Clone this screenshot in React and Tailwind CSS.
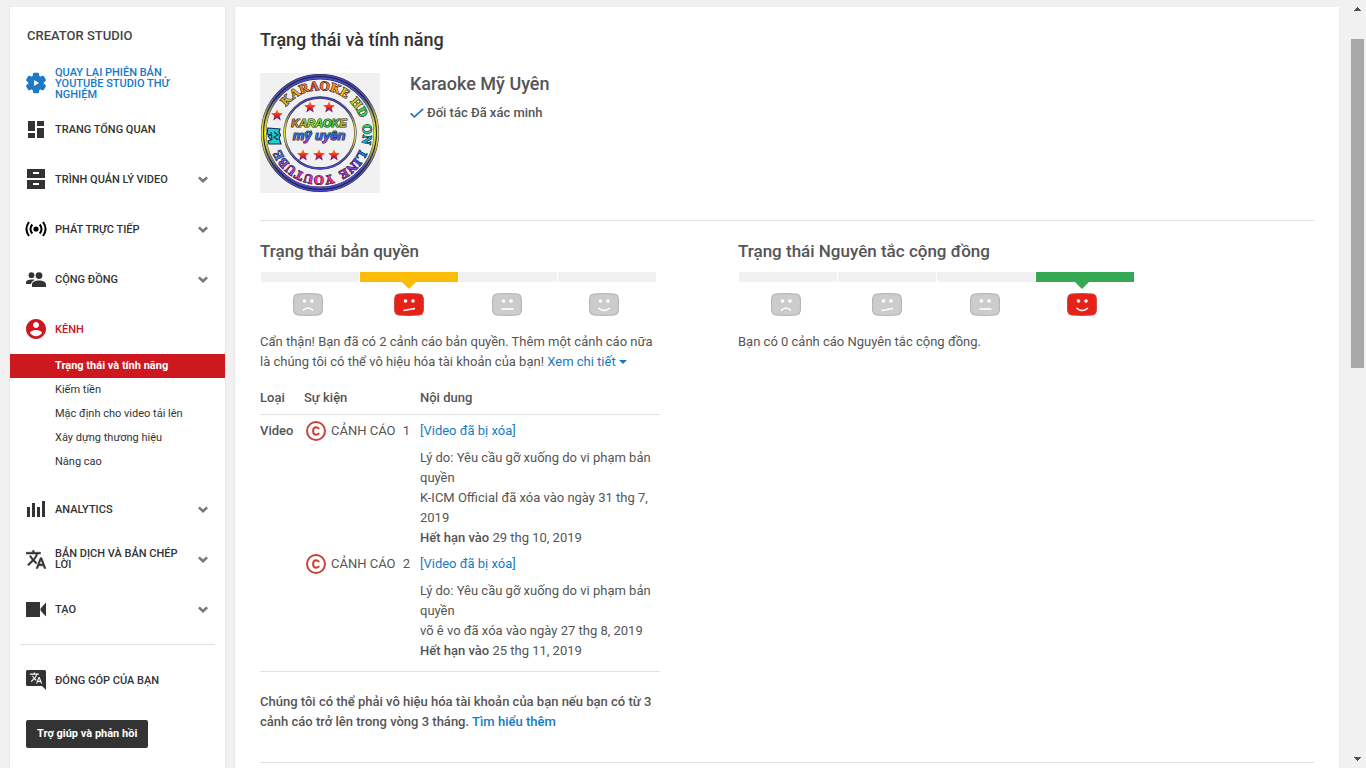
import React from 'react';

const GearPlayIcon = () => (
  <svg width="24" height="24" viewBox="0 0 24 24" className="-mx-px shrink-0">
    <path fill="#1d79c9" stroke="#1d79c9" strokeWidth="1.200" strokeLinejoin="round" d="M19.14,12.94c0.04-0.3,0.06-0.61,0.06-0.94c0-0.32-0.02-0.64-0.07-0.94l2.03-1.58c0.18-0.14,0.23-0.41,0.12-0.61l-1.92-3.32c-0.12-0.22-0.37-0.29-0.59-0.22l-2.39,0.96c-0.5-0.38-1.03-0.7-1.62-0.94L14.4,2.81c-0.04-0.24-0.24-0.41-0.48-0.41h-3.84c-0.24,0-0.43,0.17-0.47,0.41L9.25,5.35C8.66,5.59,8.12,5.92,7.63,6.29L5.24,5.33c-0.22-0.08-0.47,0-0.59,0.22L2.74,8.87C2.62,9.08,2.66,9.34,2.86,9.48l2.03,1.58C4.84,11.36,4.8,11.69,4.8,12s0.02,0.64,0.07,0.94l-2.03,1.58c-0.18,0.14-0.23,0.41-0.12,0.61l1.92,3.32c0.12,0.22,0.37,0.29,0.59,0.22l2.39-0.96c0.5,0.38,1.03,0.7,1.62,0.94l0.36,2.54c0.05,0.24,0.24,0.41,0.48,0.41h3.84c0.24,0,0.44-0.17,0.47-0.41l0.36-2.54c0.59-0.24,1.13-0.56,1.62-0.94l2.39,0.96c0.22,0.08,0.47,0,0.59-0.22l1.92-3.32c0.12-0.22,0.07-0.47-0.12-0.61L19.14,12.94z" />
    <path fill="#fff" d="M10 9v6l5-3z" />
  </svg>
);

const DashboardIcon = () => (
  <svg width="16" height="17" viewBox="0 0 16 17" fill="#333">
    <path d="M0 0h7v10H0zM9 0h7v5H9zM9 7h7v10H9zM0 12h7v5H0z" />
  </svg>
);

const DrawerIcon = () => (
  <svg width="18" height="20" viewBox="0 0 18 20">
    <path fill="#333" d="M0 0h18v9H0zM0 11h18v9H0z" />
    <path fill="#fff" d="M6 3h6v2H6zM6 14h6v2H6z" />
  </svg>
);

const LiveIcon = () => (
  <svg width="22" height="16" viewBox="0 0 22 16" fill="none" stroke="#000" strokeWidth="2">
    <circle cx="11" cy="8" r="2.6" fill="#000" stroke="none" />
    <path d="M4 1Q-1.200 8 4 15M18 1Q23.200 8 18 15M7.300 3.500Q3.600 8 7.300 12.500M14.700 3.500Q18.400 8 14.700 12.500" />
  </svg>
);

const PeopleIcon = () => (
  <svg width="20" height="15" viewBox="0 0 20 15" fill="#333">
    <circle cx="5.500" cy="3.200" r="2.900" />
    <circle cx="13" cy="3.600" r="3.400" />
    <path d="M0 12V10.500C0 8.500 3 7.600 6 7.600c1 0 2 .1 2.800.3C6.500 9 5.200 10.200 5 12zM6 15v-2.500C6 10 9.500 8.600 13 8.600s7 1.400 7 3.900V15z" />
  </svg>
);

const ChannelIcon = () => (
  <svg width="20" height="20" viewBox="2 2 20 20" fill="#cc181e">
    <path d="M12 2C6.480 2 2 6.480 2 12s4.480 10 10 10 10-4.480 10-10S17.520 2 12 2zm0 3c1.660 0 3 1.340 3 3s-1.340 3-3 3-3-1.340-3-3 1.340-3 3-3zm0 14.200c-2.500 0-4.710-1.280-6-3.220.030-1.990 4-3.080 6-3.080 1.990 0 5.970 1.090 6 3.080-1.290 1.940-3.500 3.220-6 3.220z" />
  </svg>
);

const AnalyticsIcon = () => (
  <svg width="18" height="16" viewBox="0 0 18 16" fill="#333">
    <path d="M0 6h3v10H0zM5 2h3v14H5zM10 6h3v10h-3zM15 0h3v16h-3z" />
  </svg>
);

const translatePath =
  'M12.870 15.070l-2.540-2.510.030-.030c1.740-1.940 2.980-4.170 3.710-6.530H17V4h-7V2H8v2H1v1.990h11.170C11.500 7.920 10.440 9.750 9 11.350 8.070 10.320 7.300 9.190 6.690 8h-2c.730 1.630 1.730 3.170 2.980 4.560l-5.090 5.020L4 19l5-5 3.110 3.110.760-2.040zM18.500 10h-2L12 22h2l1.120-3h4.750L21 22h2l-4.500-12zm-2.620 7l1.620-4.330L19.120 17h-3.240z';

const TranslateIcon = () => (
  <svg width="20" height="19" viewBox="1 2 22 20" fill="#333" stroke="#333" strokeWidth=".5">
    <path d={translatePath} />
  </svg>
);

const CameraIcon = () => (
  <svg width="20" height="15" viewBox="0 0 20 15" fill="#333">
    <path d="M0 0h14v15H0zM20 .5v14L14.500 8.500v-2z" />
  </svg>
);

const ContributeIcon = () => (
  <svg width="20" height="20" viewBox="0 0 20 20">
    <path fill="#333" d="M1.500 0h17A1.500 1.500 0 0 1 20 1.500V20l-4-4H1.500A1.500 1.500 0 0 1 0 14.500v-13A1.500 1.500 0 0 1 1.500 0z" />
    <path fill="#fff" transform="translate(3.300 1.300) scale(.56)" d={translatePath} />
  </svg>
);

const Chevron = () => (
  <svg width="10" height="8" viewBox="0 0 10 8" fill="none" stroke="#777" strokeWidth="2.600" className="ml-auto mt-px shrink-0">
    <path d="M.9 1.400L5 5.300l4.100-3.900" />
  </svg>
);

const CopyrightIcon = () => (
  <svg width="22" height="22" viewBox="0 0 22 22" fill="none" stroke="#c6433a" className="shrink-0">
    <circle cx="11" cy="11" r="9" strokeWidth="2" />
    <path d="M14 12.800q-.7 2-2.900 2-3-.1-3-3.800t3-3.800q2.200 0 2.900 2" strokeWidth="2" />
  </svg>
);

const mouths = {
  sad: 'M10 17.500Q15 12.500 20 17.500',
  unsure: 'M9.500 17.500L21 15.500',
  neutral: 'M9.500 16h12',
  happy: 'M9.500 15Q15 20 21 15',
};

const Face = ({ mood, active }) => (
  <svg width="30" height="23" viewBox="0 0 30 23">
    <path
      d="M4.500 1Q15 .1 25.500 1 29 1.300 29.300 5q.4 6.500 0 13-.3 3.700-3.800 4-10.500.9-21 0Q1 21.700.7 18q-.4-6.500 0-13Q1 1.300 4.500 1z"
      fill={active ? '#e62117' : '#ccc'}
      stroke={active ? '#d0443c' : '#b0b0b0'}
    />
    <circle cx="11.500" cy="8" r="1.800" fill="#fff" />
    <circle cx="19" cy="8" r="1.800" fill="#fff" />
    <path d={mouths[mood]} fill="none" stroke="#fff" strokeWidth="1.600" />
  </svg>
);

const moods = ['sad', 'unsure', 'neutral', 'happy'];

function StatusBar({ active, barClass, arrowClass, label }) {
  return (
    <div role="img" aria-label={label} className="mt-[11px] w-[396px]">
      <div className="ml-px grid grid-cols-4 gap-px">
        {moods.map((m, i) => (
          <div key={m} className={i === active ? `h-2.5 ${barClass}` : 'h-2.5 bg-[#f1f1f1]'} />
        ))}
      </div>
      <div className="mt-[11px] grid grid-cols-[101px_98px_97px_30px] pl-[33px]">
        {moods.map((m, i) => (
          <div key={m} className="relative">
            {i === active && (
              <svg width="14" height="7" viewBox="0 0 14 7" className={`absolute -top-[11px] left-2 ${arrowClass}`}>
                <path d="M0 0h14L7 7z" />
              </svg>
            )}
            <Face mood={m} active={i === active} />
          </div>
        ))}
      </div>
    </div>
  );
}

const ringWords = [
  { at: 62, letters: [['K', '#c9bd20'], ['A', '#efb21c'], ['R', '#f2801c'], ['A', '#f0602c'], ['O', '#f07030'], ['K', '#ff9418'], ['E', '#f8c010']] },
  { at: 110, letters: [['H', '#b8d030'], ['D', '#38d848']] },
  { at: 136, letters: [['O', '#30d078'], ['N', '#20a8c8']] },
  { at: 168, letters: [['L', '#2070e0'], ['I', '#5048e0'], ['N', '#a030d8'], ['E', '#c828b8']] },
  { at: 221, letters: [['Y', '#f02898'], ['O', '#f82890'], ['U', '#e828b0'], ['T', '#d02ac8'], ['U', '#a840d8'], ['B', '#7a50d8'], ['E', '#3880e8']] },
];

const stars = [[17, 42], [50, 34], [69, 34], [43, 82], [59, 82], [74, 82]];

function ChannelAvatar() {
  return (
    <svg width="120" height="120" viewBox="0 0 120 120" role="img" aria-label="Karaoke Mỹ Uyên" className="shrink-0 bg-[#f1f1f1]">
      <defs>
        <linearGradient id="ring" x1="0" y1="0" x2="0" y2="1">
          <stop offset="0" stopColor="#4848c8" />
          <stop offset=".18" stopColor="#50509c" />
          <stop offset=".38" stopColor="#c8c440" />
          <stop offset=".5" stopColor="#f0ec28" />
          <stop offset=".62" stopColor="#c8c440" />
          <stop offset=".82" stopColor="#50509c" />
          <stop offset="1" stopColor="#4848c8" />
        </linearGradient>
        <linearGradient id="star" x1="0" y1="0" x2="0" y2="1">
          <stop offset="0" stopColor="#ffb020" />
          <stop offset=".5" stopColor="#f02818" />
          <stop offset="1" stopColor="#4818a0" />
        </linearGradient>
        <linearGradient id="warm" x1="0" y1="0" x2="1" y2="0">
          <stop offset="0" stopColor="#e86030" />
          <stop offset=".35" stopColor="#a0e020" />
          <stop offset=".7" stopColor="#28d040" />
          <stop offset="1" stopColor="#ffa820" />
        </linearGradient>
        <linearGradient id="cool" x1="0" y1="0" x2="0" y2="1">
          <stop offset="0" stopColor="#20b0a0" />
          <stop offset=".5" stopColor="#2868f0" />
          <stop offset="1" stopColor="#e028d0" />
        </linearGradient>
        <path id="orbit" d="M17 60a43 43 0 0 1 86 0a43 43 0 0 1 -86 0" />
      </defs>
      <g fill="none">
        <circle cx="60" cy="60" r="56.300" stroke="#202040" strokeWidth="5.400" />
        <circle cx="60" cy="60" r="57.800" stroke="url(#ring)" strokeWidth="1.600" />
        <circle cx="60" cy="60" r="54.900" stroke="url(#ring)" strokeWidth="2" />
        <circle cx="60" cy="60" r="35.500" stroke="#222250" strokeWidth="2.400" />
        <circle cx="60" cy="60" r="35.500" stroke="url(#ring)" strokeWidth="1.500" />
      </g>
      {ringWords.map((w) => (
        <text key={w.at} fontFamily="Liberation Serif, serif" fontWeight="700" fontSize="13" textAnchor="middle" stroke="#181830" strokeWidth="1.100" strokeLinejoin="round" paintOrder="stroke">
          <textPath href="#orbit" startOffset={w.at}>
            {w.letters.map(([ch, fill], i) => (
              <tspan key={i} fill={fill}>{ch}</tspan>
            ))}
          </textPath>
        </text>
      ))}
      {stars.map(([x, y]) => (
        <path
          key={`${x}-${y}`}
          transform={`translate(${x} ${y})`}
          fill="url(#star)"
          d="M0-6L1.700-2 6-1.800 2.600 1 3.800 5.500 0 3-3.800 5.500-2.600 1-6-1.800-1.700-2z"
        />
      ))}
      <path fill="#20d0c8" stroke="#183058" strokeWidth="1.200" d="M8 55l12 1-1 3 1.500 3-1.500 3 2 6-12 0-1-3 3-1-3-4 3-1-4-1z" />
      <path d="M11 59l1 8M14 59l4 3-4 2 4 3" fill="none" stroke="#183070" strokeWidth="1.200" />
      <g fontFamily="Liberation Sans, sans-serif" fontStyle="italic" fontWeight="700" textAnchor="middle" stroke="#203018" strokeWidth="1.200" strokeLinejoin="round" paintOrder="stroke">
        <text x="59" y="54" fontSize="11" fill="url(#warm)">KARAOKE</text>
        <text x="59" y="67" fontSize="13" fill="url(#cool)">mỹ uyên</text>
      </g>
    </svg>
  );
}

const subItems = ['Kiếm tiền', 'Mặc định cho video tải lên', 'Xây dựng thương hiệu', 'Nâng cao'];

function NavItem({ icon, children, chevron, heightClass = 'h-[50px]', textClass = 'text-[#333]' }) {
  return (
    <a href="#" className={`flex items-center pl-[15px] pr-[17px] ${heightClass}`}>
      <span className="flex w-[22px] shrink-0 justify-center">{icon}</span>
      <span className={`ml-2 w-[130px] text-[11px] font-medium leading-[11px] ${textClass}`}>{children}</span>
      {chevron && <Chevron />}
    </a>
  );
}

function Sidebar() {
  return (
    <nav className="w-[215px] shrink-0 bg-white shadow-[0_1px_2px_rgba(0,0,0,0.1)]">
      <h2 className="pb-4 pl-[17px] pt-[19px] text-[13px] font-medium leading-5 text-[#444]">CREATOR STUDIO</h2>
      <NavItem icon={<GearPlayIcon />} heightClass="h-[42px]" textClass="text-[#167ac6]">QUAY LẠI PHIÊN BẢN YOUTUBE STUDIO THỬ NGHIỆM</NavItem>
      <NavItem icon={<DashboardIcon />}>TRANG TỔNG QUAN</NavItem>
      <NavItem icon={<DrawerIcon />} chevron>TRÌNH QUẢN LÝ VIDEO</NavItem>
      <NavItem icon={<LiveIcon />} chevron>PHÁT TRỰC TIẾP</NavItem>
      <NavItem icon={<PeopleIcon />} chevron>CỘNG ĐỒNG</NavItem>
      <NavItem icon={<ChannelIcon />} textClass="text-[#cc181e]">KÊNH</NavItem>
      <ul className="text-[11px] leading-6 text-[#333]">
        <li>
          <a href="#" aria-current="page" className="block bg-[#cc181e] pl-[45px] font-bold text-white">Trạng thái và tính năng</a>
        </li>
        {subItems.map((s) => (
          <li key={s}>
            <a href="#" className="block pl-[45px]">{s}</a>
          </li>
        ))}
      </ul>
      <div className="mt-2.5">
        <NavItem icon={<AnalyticsIcon />} chevron>ANALYTICS</NavItem>
        <NavItem icon={<TranslateIcon />} chevron>BẢN DỊCH VÀ BẢN CHÉP LỜI</NavItem>
        <NavItem icon={<CameraIcon />} chevron>TẠO</NavItem>
      </div>
      <hr className="mx-2.5 mb-2.5 mt-2.5 border-[#e2e2e2]" />
      <NavItem icon={<ContributeIcon />}>ĐÓNG GÓP CỦA BẠN</NavItem>
      <button className="ml-4 mt-[15px] rounded-[2px] bg-[#333] px-[11px] text-[11px] font-bold leading-7 text-white">Trợ giúp và phản hồi</button>
    </nav>
  );
}

const strikes = [
  { n: 1, type: 'Video', detail: 'K-ICM Official đã xóa vào ngày 31 thg 7, 2019', expires: '29 thg 10, 2019' },
  { n: 2, type: '', detail: 'võ ê vo đã xóa vào ngày 27 thg 8, 2019', expires: '25 thg 11, 2019' },
];

function StrikeTable() {
  return (
    <div className="mt-4 border-b border-[#e2e2e2] pb-2.5">
      <table className="w-full table-fixed text-left">
        <colgroup>
          <col className="w-11" />
          <col className="w-[116px]" />
          <col />
        </colgroup>
        <thead>
          <tr className="border-b border-[#e2e2e2]">
            <th className="pb-1.5 font-medium">Loại</th>
            <th className="pb-1.5 font-medium">Sự kiện</th>
            <th className="pb-1.5 font-medium">Nội dung</th>
          </tr>
        </thead>
        <tbody>
          {strikes.map((s) => (
            <tr key={s.n} className="align-top">
              <td className="pt-1.5 font-medium">{s.type}</td>
              <td className="pt-1.5">
                <div className="flex h-5 items-center whitespace-nowrap pl-px">
                  <CopyrightIcon />
                  <span className="ml-1">CẢNH CÁO</span>
                  <span className="ml-auto pr-2.5">{s.n}</span>
                </div>
              </td>
              <td className="pt-1.5">
                <a href="#" className="block text-[#167ac6]">[Video đã bị xóa]</a>
                <p className="mt-[7px]">Lý do: Yêu cầu gỡ xuống do vi phạm bản quyền</p>
                <p>{s.detail}</p>
                <p><b className="font-medium">Hết hạn vào</b> {s.expires}</p>
              </td>
            </tr>
          ))}
        </tbody>
      </table>
    </div>
  );
}

function Scrollbar() {
  return (
    <div aria-hidden="true" className="flex w-[17px] shrink-0 flex-col items-center bg-[#f1f1f1]">
      <svg width="7" height="4" viewBox="0 0 7 4" className="mt-[7px] shrink-0" fill="#505050"><path d="M3 0h1v1h1v1h1v1h1v1H0V3h1V2h1V1h1z" /></svg>
      <div className="mt-7 h-[329px] w-[13px] bg-[#a8a8a8]" />
      <svg width="7" height="4" viewBox="0 0 7 4" className="mb-[7px] mt-auto shrink-0" fill="#505050"><path d="M0 0h7v1H6v1H5v1H4v1H3V3H2V2H1V1H0z" /></svg>
    </div>
  );
}

export default function App() {
  return (
    <div className="flex h-screen overflow-hidden bg-[#f1f1f1] font-[Roboto,sans-serif] text-[13px] leading-5 text-[#555]">
      <div className="flex min-w-0 flex-1 gap-2.5 px-2.5 pt-[7px]">
        <Sidebar />
        <main className="min-w-0 flex-1 bg-white px-[25px] pt-[23px] shadow-[0_1px_2px_rgba(0,0,0,0.1)]">
          <h1 className="text-[18px] font-medium leading-5 text-[#333]">Trạng thái và tính năng</h1>
          <div className="mt-[23px] flex gap-[30px] border-b border-[#e2e2e2] pb-[27px]">
            <ChannelAvatar />
            <div>
              <h2 className="text-[18px] font-medium leading-[22px]">Karaoke Mỹ Uyên</h2>
              <p className="mt-2 flex items-center font-medium">
                <svg width="14" height="10" viewBox="0 0 14 10" fill="none" stroke="#2b78b8" strokeWidth="1.800" className="mr-[3px]">
                  <path d="M.7 5.300l3.700 3.500L13.200.8" />
                </svg>
                Đối tác Đã xác minh
              </p>
            </div>
          </div>
          <div className="flex gap-[78px] border-b border-[#e2e2e2] pb-[30px] pt-5">
            <section className="w-[400px] shrink-0">
              <h2 className="text-[17px] font-medium leading-5">Trạng thái bản quyền</h2>
              <StatusBar active={1} barClass="bg-[#fbbc05]" arrowClass="fill-[#fbbc05]" label="Trạng thái bản quyền" />
              <p className="mt-4">
                Cẩn thận! Bạn đã có 2 cảnh cáo bản quyền. Thêm một cảnh cáo nữa là chúng tôi có thể vô hiệu hóa tài khoản của bạn!{' '}
                <button className="inline-flex items-center text-[#167ac6]">
                  Xem chi tiết
                  <svg width="8" height="4" viewBox="0 0 8 4" className="ml-[3px] fill-[#167ac6]"><path d="M0 0h8L4 4z" /></svg>
                </button>
              </p>
              <StrikeTable />
              <p className="mt-5 font-medium">
                Chúng tôi có thể phải vô hiệu hóa tài khoản của bạn nếu bạn có từ 3 cảnh cáo trở lên trong vòng 3 tháng.{' '}
                <a href="#" className="text-[#167ac6]">Tìm hiểu thêm</a>
              </p>
            </section>
            <section className="w-[400px]">
              <h2 className="text-[17px] font-medium leading-5">Trạng thái Nguyên tắc cộng đồng</h2>
              <StatusBar active={3} barClass="bg-[#34a853]" arrowClass="fill-[#34a853]" label="Trạng thái Nguyên tắc cộng đồng" />
              <p className="mt-4">Bạn có 0 cảnh cáo Nguyên tắc cộng đồng.</p>
            </section>
          </div>
        </main>
      </div>
      <Scrollbar />
    </div>
  );
}
